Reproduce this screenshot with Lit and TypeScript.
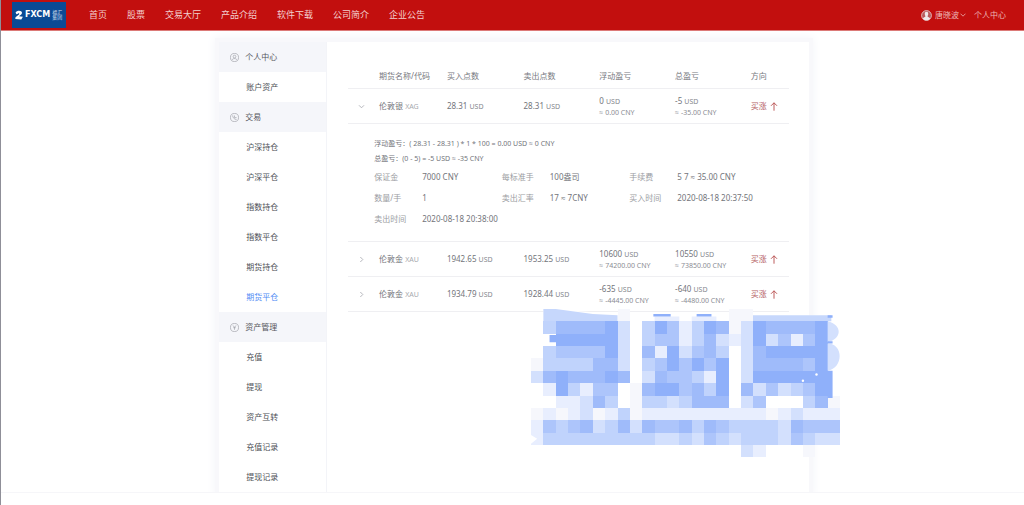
import { LitElement, html, css, svg } from "lit";
import { customElement, state } from "lit/decorators.js";
import { classMap } from "lit/directives/class-map.js";

const FONT = css`"Noto Sans", "Open Sans", "Noto Sans CJK SC", sans-serif`;

/* ---------- top bar ---------- */

@customElement("top-bar")
class TopBar extends LitElement {
  static styles = css`
    :host { display: block; font-family: ${FONT}; }
    .bar {
      display: flex; align-items: center; height: 30px; padding: 0 18px 0 11px;
      background: #c20f0e; border-bottom: 1px solid #dc7a78; color: #f3cfce;
    }
    .logo {
      display: flex; align-items: center; gap: 2px; height: 26px; width: 54px;
      box-sizing: border-box; padding: 0 3px; background: #0b4a94; color: #fff; text-decoration: none;
    }
    .logo svg { width: 8px; height: 10px; flex: none; }
    .brand { font: bold 8px/10px "DejaVu Sans", sans-serif; flex: none; }
    .sub { font-size: 5px; line-height: 5px; width: 10px; flex: none; white-space: normal; color: #cfdcec; }
    nav { display: flex; gap: 20px; margin-left: 23px; font-size: 9px; line-height: 12px; }
    a { color: inherit; text-decoration: none; white-space: nowrap; }
    .user { margin-left: auto; display: flex; align-items: center; font-size: 8px; line-height: 12px; gap: 8px; color: #ecb5b4; }
    .who {
      display: flex; align-items: center; gap: 3px; border: 0; padding: 0; background: none;
      color: inherit; font: inherit;
    }
    .avatar { width: 11px; height: 11px; }
    .caret { width: 6px; height: 4px; margin-left: -2px; }
  `;

  render() {
    const links = ["首页", "股票", "交易大厅", "产品介绍", "软件下载", "公司简介", "企业公告"];
    return html`<header class="bar">
      <a class="logo" href="#" aria-label="FXCM">
        <svg viewBox="0 0 8 10" fill="#fff"><path d="M.6 2.6C1.6.6 5 .1 6.4 1.6 7.8 3 6.600 4.600 4.800 5.600L4 6.300 7.900 6.800 6.300 9.400.300 8.900.500 7.200 4 4.400C4.600 3.500 3.700 2.900 2.900 3.700L1.400 4.300Z"/></svg>
        <span class="brand">FXCM</span>
        <span class="sub">福汇集团</span>
      </a>
      <nav>${links.map((t) => html`<a href="#">${t}</a>`)}</nav>
      <div class="user">
        <button class="who">
          <svg class="avatar" viewBox="0 0 11 11">
            <circle cx="5.500" cy="5.500" r="4.900" fill="#b95a5c" stroke="#eed5d5" stroke-width=".8"/>
            <path d="M5.500 1.700C7 1.700 7.400 3 7.200 4.300 7.100 5.300 6.700 5.800 6.500 6.200 6.500 7 8.700 7.200 9.200 8.400 8.300 9.700 7 10.300 5.500 10.300S2.700 9.700 1.800 8.400C2.300 7.200 4.500 7 4.500 6.200 4.300 5.800 3.900 5.300 3.800 4.300 3.600 3 4 1.700 5.500 1.700Z" fill="#f0e9ea"/>
          </svg>
          唐晓波
          <svg class="caret" viewBox="0 0 6 4"><path d="M.5.7 3 3.200 5.500.700" fill="none" stroke="#ecb5b4" stroke-width=".8"/></svg>
        </button>
        <a href="#">个人中心</a>
      </div>
    </header>`;
  }
}

/* ---------- side menu ---------- */

const glyphs = {
  person: svg`<circle cx="5" cy="4" r="1.500"/><path d="M2.400 7.900C2.500 5.600 7.500 5.600 7.600 7.900"/>`,
  trade: svg`<path d="M3 2.600C2.800 5 4.800 7.300 7.300 7.200M5 2.800V5.100H7.300"/>`,
  yen: svg`<path d="M3.300 2.700 5 4.900 6.700 2.700M5 4.900V7.600M3.600 5.200H6.400"/>`,
};

const groups: { title: string; icon: keyof typeof glyphs; items: string[] }[] = [
  { title: "个人中心", icon: "person", items: ["账户资产"] },
  { title: "交易", icon: "trade", items: ["沪深持仓", "沪深平仓", "指数持仓", "指数平仓", "期货持仓", "期货平仓"] },
  { title: "资产管理", icon: "yen", items: ["充值", "提现", "资产互转", "充值记录", "提现记录"] },
];

@customElement("side-menu")
class SideMenu extends LitElement {
  @state() active = "期货平仓";

  static styles = css`
    :host { display: block; font-family: ${FONT}; font-size: 8px; line-height: 30px; border-right: 1px solid #f3f4f8; }
    .title {
      display: flex; align-items: center; gap: 6px; height: 30px; margin: 0; padding-left: 11px;
      background: #f5f6fa; color: #55575d; font-size: 8px; font-weight: 400;
    }
    .title svg { width: 9px; height: 9px; fill: none; stroke: #999ba3; stroke-width: .7; }
    ul { list-style: none; margin: 0; padding: 0; }
    a { display: block; height: 30px; padding-left: 27px; color: #4d4f56; text-decoration: none; }
    .on { color: #4f8bf5; }
  `;

  render() {
    return groups.map((g) => html`
      <h2 class="title"><svg viewBox="0 0 10 10"><circle cx="5" cy="5" r="4.500"/>${glyphs[g.icon]}</svg>${g.title}</h2>
      <ul>${g.items.map((t) => html`<li>
        <a href="#" class=${classMap({ on: t === this.active })} @click=${() => (this.active = t)}>${t}</a>
      </li>`)}</ul>`);
  }
}

/* ---------- closed positions ---------- */

interface Position {
  name: string; code: string; buy: string; sell: string;
  float: string; floatCny: string; total: string; totalCny: string; open?: boolean;
}

const positions: Position[] = [
  { name: "伦敦银", code: "XAG", buy: "28.31", sell: "28.31", float: "0", floatCny: "0.00", total: "-5", totalCny: "-35.00", open: true },
  { name: "伦敦金", code: "XAU", buy: "1942.65", sell: "1953.25", float: "10600", floatCny: "74200.00", total: "10550", totalCny: "73850.00" },
  { name: "伦敦金", code: "XAU", buy: "1934.79", sell: "1928.44", float: "-635", floatCny: "-4445.00", total: "-640", totalCny: "-4480.00" },
];

const details = [
  ["保证金", "7000 CNY"], ["每标准手", "100盎司"], ["手续费", "5 7 ≈ 35.00 CNY"],
  ["数量/手", "1"], ["卖出汇率", "17 ≈ 7CNY"], ["买入时间", "2020-08-18 20:37:50"],
  ["卖出时间", "2020-08-18 20:38:00"],
];

@customElement("position-table")
class PositionTable extends LitElement {
  static styles = css`
    :host { display: block; font-family: ${FONT}; font-size: 8px; line-height: 12px; color: #73757b; }
    table { width: 100%; table-layout: fixed; border-collapse: separate; border-spacing: 0; }
    .c0 { width: 7%; } .c1 { width: 15.400%; } .c2 { width: 17.400%; } .c3 { width: 17.200%; }
    .c4 { width: 17.200%; } .c5 { width: 17.200%; }
    th, td { padding: 0; text-align: left; font-weight: 400; white-space: nowrap; border-bottom: 1px solid #efeff2; }
    th { height: 25px; color: #777980; }
    .row td { height: 34px; }
    .toggle { display: block; border: 0; padding: 0 0 0 10px; background: none; height: 12px; }
    .toggle svg { display: block; width: 7px; height: 7px; fill: none; stroke: #a3a5ac; stroke-width: .8; }
    .shut svg { transform: rotate(-90deg); }
    .unit { font-size: 7px; color: #85878e; }
    .code { font-size: 7px; color: #a7a9ae; }
    .cny { display: block; font-size: 7px; line-height: 10px; color: #8b8d94; }
    .amount { display: block; line-height: 12px; }
    .dir { display: flex; align-items: center; gap: 3px; color: #b4605f; }
    .dir svg { width: 8px; height: 9px; fill: none; stroke: #b5494a; stroke-width: .9; }
    .more { padding: 12px 0 12px 26px; }
    .calc { margin: 0; font-size: 7px; line-height: 15px; }
    dl { display: grid; grid-template-columns: repeat(3, 1fr); margin: 0; padding-right: 32px; }
    .pair { display: flex; line-height: 21px; }
    dt { width: 48px; flex: none; color: #9a9ca2; }
    dd { margin: 0; }
  `;

  money(v: string, cny: string) {
    return html`<td><span class="amount">${v} <span class="unit">USD</span></span><span class="cny">≈ ${cny} CNY</span></td>`;
  }

  render() {
    return html`<table>
      <colgroup>${[0, 1, 2, 3, 4, 5, 6].map((i) => html`<col class="c${i}">`)}</colgroup>
      <thead><tr><th></th>${["期货名称/代码", "买入点数", "卖出点数", "浮动盈亏", "总盈亏", "方向"].map((t) => html`<th scope="col">${t}</th>`)}</tr></thead>
      <tbody>${positions.map((p) => html`
        <tr class="row">
          <td><button class="toggle ${p.open ? "" : "shut"}" aria-label="${p.name} ${p.code}" aria-expanded=${p.open ? "true" : "false"}>
            <svg viewBox="0 0 7 7"><path d="M1 2.300 3.500 4.800 6 2.300"/></svg></button></td>
          <td>${p.name} <span class="code">${p.code}</span></td>
          <td>${p.buy} <span class="unit">USD</span></td>
          <td>${p.sell} <span class="unit">USD</span></td>
          ${this.money(p.float, p.floatCny)}
          ${this.money(p.total, p.totalCny)}
          <td><span class="dir">买涨<svg viewBox="0 0 8 9"><path d="M4 8.700V.800M1 3.800 4 .800 7 3.800"/></svg></span></td>
        </tr>
        ${p.open ? html`<tr><td class="more" colspan="7">
          <p class="calc">浮动盈亏：( 28.31 - 28.31 ) * 1 * 100 = 0.00 USD ≈ 0 CNY</p>
          <p class="calc">总盈亏：(0 - 5) = -5 USD ≈ -35 CNY</p>
          <dl>${details.map(([k, v]) => html`<div class="pair"><dt>${k}</dt><dd>${v}</dd></div>`)}</dl>
        </td></tr>` : ""}`)}
      </tbody>
    </table>`;
  }
}

/* ---------- pixel mosaic: one digit per cell, 0 is empty, 7 is darkest ---------- */

const mosaic = [
  "0000000100000000110000000",
  "0466667304752476137666673",
  "0077777304552463237352573",
  "0455557306273564036777773",
  "1444466304575757036666573",
  "3676667603655427037777770",
  "0274255016775647063534570",
  "0022364014434666035000461",
  "1212312412222222222123222",
  "2545634636556465444436555",
  "2444444444334354344435433",
  "0000000000000000032000100",
];
const shades = ["none", "#f6f7fc", "#e8eefe", "#d3e0fd", "#c0d3fc", "#adc5fb", "#9fbbfa", "#8fb0fa"];

@customElement("pixel-mosaic")
class PixelMosaic extends LitElement {
  static styles = css`
    :host { display: block; }
    svg { display: block; width: 100%; overflow: visible; }
  `;

  render() {
    return html`<svg viewBox="0 0 250 120" aria-hidden="true">
      <path fill="#fff" d="M10 0 80 4.500V90H10ZM80 10H240V90H80Z"/>
      <path fill="#c6d7fc" d="M10 0H20L50 4 70 5V10H10ZM177 5H243V10H177Z"/>
      <path fill="#e8eefe" d="M100 6H120V10H100ZM130 6H150V10H130Z"/>
      <path fill="#8fb0fa" d="M99 4H113V6H99ZM134 4H146V6H134ZM15 21H22V27H15ZM240 5H244V7H240Z"/>
      <g shape-rendering="crispEdges">
        ${mosaic.flatMap((line, y) => [...line].map((c, x) =>
          c === "0" || (x === 24 && y > 0 && y < 5) ? "" : svg`<rect x=${x * 10} y=${y * 10} width="10" height="10" fill=${shades[+c]}/>`))}
      </g>
      <path fill="#d3e0fd" d="M240 10C252 13 252 24 240 27ZM240 28C253 28 253 48 240 50Z"/>
      <path fill="#8fb0fa" d="M240 50H244V72H240ZM240 26H244V28H240Z"/>
      <circle cx="220" cy="58" r="1" fill="#fff"/><circle cx="231" cy="53" r="1" fill="#fff"/>
      <path fill="#fff" d="M0 102 5 105 0 109Z"/>
    </svg>`;
  }
}

/* ---------- page ---------- */

@customElement("app-root")
class AppRoot extends LitElement {
  static styles = css`
    :host { display: block; min-height: 100vh; background: #fff; border-left: 1px solid #8f8f98; box-sizing: border-box; }
    main { padding: 11px 0 0 3px; overflow: hidden; }
    .card {
      position: relative; display: grid; grid-template-columns: 108px minmax(0, 1fr);
      width: 57.800%; max-width: 960px; margin: 0 auto; background: #fff;
      box-shadow: 0 0 0 4px #f8f8fb, 0 0 9px 5px #f5f6fa;
    }
    .body { padding: 21px 20px 0 21px; }
    .overlay { position: absolute; left: 312px; top: 267px; width: 309px; }
    footer { border-top: 1px solid #f6f6f9; }
  `;

  render() {
    return html`<top-bar></top-bar>
      <main>
        <div class="card">
          <side-menu></side-menu>
          <section class="body"><position-table></position-table></section>
          <pixel-mosaic class="overlay"></pixel-mosaic>
        </div>
      </main>
      <footer></footer>`;
  }
}
